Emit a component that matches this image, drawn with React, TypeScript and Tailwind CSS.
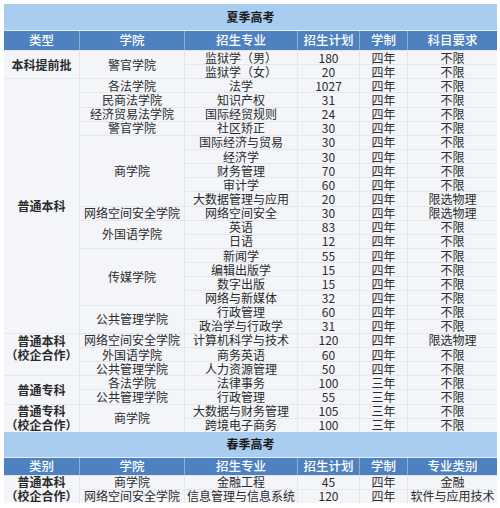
const font = { fontFamily: '"Noto Sans CJK SC", "Noto Sans", sans-serif' }

type Cell = { t: string; span?: string; bold?: boolean }

const cols = 'grid-cols-[75px_104px_112px_61px_47px_89px]'

const summer: Cell[] = [
  { t: '本科提前批', span: 'row-span-2', bold: true },
  { t: '警官学院', span: 'row-span-2' },
  { t: '监狱学（男）' }, { t: '180' }, { t: '四年' }, { t: '不限' },
  { t: '监狱学（女）' }, { t: '20' }, { t: '四年' }, { t: '不限' },
  { t: '普通本科', span: 'row-span-[18]', bold: true },
  { t: '各法学院' }, { t: '法学' }, { t: '1027' }, { t: '四年' }, { t: '不限' },
  { t: '民商法学院' }, { t: '知识产权' }, { t: '31' }, { t: '四年' }, { t: '不限' },
  { t: '经济贸易法学院' }, { t: '国际经贸规则' }, { t: '24' }, { t: '四年' }, { t: '不限' },
  { t: '警官学院' }, { t: '社区矫正' }, { t: '30' }, { t: '四年' }, { t: '不限' },
  { t: '商学院', span: 'row-span-5' },
  { t: '国际经济与贸易' }, { t: '30' }, { t: '四年' }, { t: '不限' },
  { t: '经济学' }, { t: '30' }, { t: '四年' }, { t: '不限' },
  { t: '财务管理' }, { t: '70' }, { t: '四年' }, { t: '不限' },
  { t: '审计学' }, { t: '60' }, { t: '四年' }, { t: '不限' },
  { t: '大数据管理与应用' }, { t: '20' }, { t: '四年' }, { t: '限选物理' },
  { t: '网络空间安全学院' }, { t: '网络空间安全' }, { t: '30' }, { t: '四年' }, { t: '限选物理' },
  { t: '外国语学院', span: 'row-span-2' },
  { t: '英语' }, { t: '83' }, { t: '四年' }, { t: '不限' },
  { t: '日语' }, { t: '12' }, { t: '四年' }, { t: '不限' },
  { t: '传媒学院', span: 'row-span-4' },
  { t: '新闻学' }, { t: '55' }, { t: '四年' }, { t: '不限' },
  { t: '编辑出版学' }, { t: '15' }, { t: '四年' }, { t: '不限' },
  { t: '数字出版' }, { t: '15' }, { t: '四年' }, { t: '不限' },
  { t: '网络与新媒体' }, { t: '32' }, { t: '四年' }, { t: '不限' },
  { t: '公共管理学院', span: 'row-span-2' },
  { t: '行政管理' }, { t: '60' }, { t: '四年' }, { t: '不限' },
  { t: '政治学与行政学' }, { t: '31' }, { t: '四年' }, { t: '不限' },
  { t: '普通本科\n（校企合作）', span: 'row-span-3 pb-[14px]', bold: true },
  { t: '网络空间安全学院' }, { t: '计算机科学与技术' }, { t: '120' }, { t: '四年' }, { t: '限选物理' },
  { t: '外国语学院' }, { t: '商务英语' }, { t: '60' }, { t: '四年' }, { t: '不限' },
  { t: '公共管理学院' }, { t: '人力资源管理' }, { t: '50' }, { t: '四年' }, { t: '不限' },
  { t: '普通专科', span: 'row-span-2', bold: true },
  { t: '各法学院' }, { t: '法律事务' }, { t: '100' }, { t: '三年' }, { t: '不限' },
  { t: '公共管理学院' }, { t: '行政管理' }, { t: '55' }, { t: '三年' }, { t: '不限' },
  { t: '普通专科\n（校企合作）', span: 'row-span-2', bold: true },
  { t: '商学院', span: 'row-span-2' },
  { t: '大数据与财务管理' }, { t: '105' }, { t: '三年' }, { t: '不限' },
  { t: '跨境电子商务' }, { t: '100' }, { t: '三年' }, { t: '不限' },
]

const spring: Cell[] = [
  { t: '普通本科\n（校企合作）', span: 'row-span-2', bold: true },
  { t: '商学院' }, { t: '金融工程' }, { t: '45' }, { t: '四年' }, { t: '金融' },
  { t: '网络空间安全学院' }, { t: '信息管理与信息系统' }, { t: '120' }, { t: '四年' }, { t: '软件与应用技术' },
]

function Header({ labels, h }: { labels: string[]; h: string }) {
  return (
    <div className={`grid ${cols} gap-px bg-[#8eb0d8] border-t border-[#e6eefa] ${h}`}>
      {labels.map((l, i) => (
        <div key={i} className="flex items-center justify-center bg-[#4d81c0] text-[12.5px] leading-none text-white font-medium">
          {l}
        </div>
      ))}
    </div>
  )
}

function Body({ cells, rows }: { cells: Cell[]; rows: string }) {
  return (
    <div className={`grid ${cols} gap-px bg-[#e3e8ef] border-t border-[#e3e8ef] ${rows}`}>
      {cells.map((c, i) => (
        <div
          key={i}
          className={`flex items-center justify-center whitespace-pre-line text-center bg-[#f3f5f9] text-[12px] text-[#2b2b2b] ${c.t.includes('\n') ? 'leading-[14px]' : 'leading-none'} ${c.span ?? ''} ${c.bold ? 'font-bold text-[#1a1a1a]' : ''}`}
        >
          {c.t}
        </div>
      ))}
    </div>
  )
}

export default function App() {
  return (
    <div className="w-[500px] h-[508px] bg-white pt-[4px] pl-[4px]" style={font}>
      <div className="w-[493px]">
        <div className="h-[26px] flex items-center justify-center bg-[#a9cdf1] text-[12px] leading-none font-bold text-[#1a1a1a]">
          夏季高考
        </div>
        <Header labels={['类型', '学院', '招生专业', '招生计划', '学制', '科目要求']} h="h-[20px]" />
        <Body cells={summer} rows="auto-rows-[13.15px]" />
        <div className="h-[25px] flex items-center justify-center bg-[#a9cdf1] text-[12px] leading-none font-bold text-[#1a1a1a]">
          春季高考
        </div>
        <Header labels={['类别', '学院', '招生专业', '招生计划', '学制', '专业类别']} h="h-[18px]" />
        <Body cells={spring} rows="auto-rows-[13px]" />
      </div>
    </div>
  )
}
